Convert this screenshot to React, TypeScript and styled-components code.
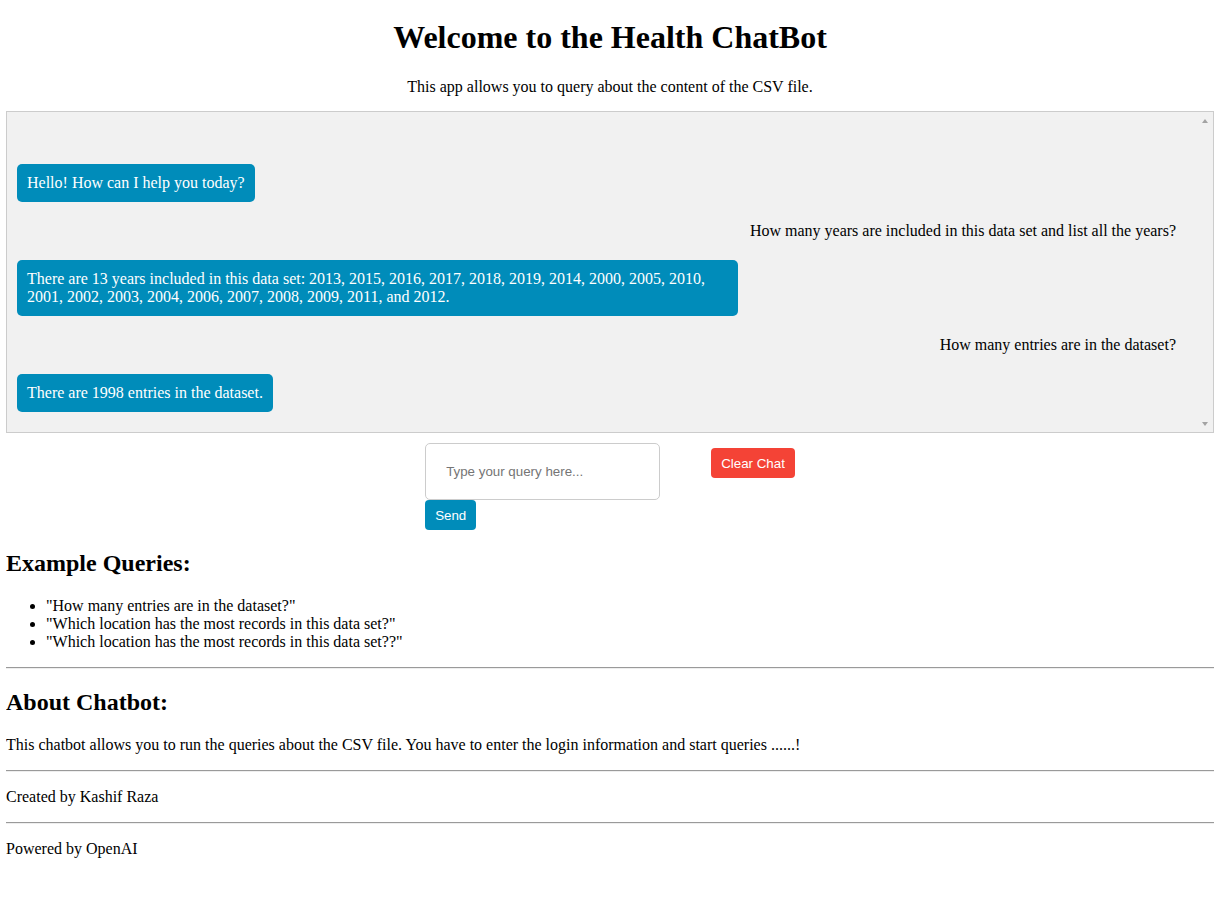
import React from "react";
import styled, { createGlobalStyle } from "styled-components";

const GlobalStyle = createGlobalStyle`
  html, body {
    background: #ffffff;
  }
  body {
    margin: 6px;
    font-family: "Liberation Serif", "Times New Roman", serif;
    font-size: 16px;
    color: #000000;
  }
`;

const Page = styled.div`
  display: block;
`;

const Title = styled.h1`
  font-size: 32px;
  font-weight: bold;
  text-align: center;
  margin: 13px 0 22.44px;
`;

const Intro = styled.p`
  text-align: center;
  margin: 16px 0 15px;
`;

const ChatFrame = styled.div`
  box-sizing: border-box;
  height: 322px;
  border: 1px solid #cccccc;
  background: #f1f1f1;
  display: flex;
`;

const MessageList = styled.div`
  flex: 1;
  min-width: 0;
  overflow-y: auto;
  padding: 52px 10px 20px;
  display: flex;
  flex-direction: column;
  gap: 10px;
`;

const ScrollRail = styled.div`
  width: 17px;
  flex: none;
  display: flex;
  flex-direction: column;
  justify-content: space-between;
  background: #f1f1f1;
`;

const ScrollArrow = styled.span<{ $dir: "up" | "down" }>`
  display: flex;
  align-items: center;
  justify-content: center;
  height: 17px;
  &::before {
    content: "";
    width: 0;
    height: 0;
    border-left: 3.5px solid transparent;
    border-right: 3.5px solid transparent;
    ${(p) =>
      p.$dir === "up"
        ? "border-bottom: 4px solid #a3a3a3;"
        : "border-top: 4px solid #a3a3a3;"}
  }
`;

const Message = styled.div<{ $from: "bot" | "user" }>`
  max-width: 60%;
  padding: 10px;
  line-height: 18px;
  border-radius: 5px;
  align-self: ${(p) => (p.$from === "bot" ? "flex-start" : "flex-end")};
  background: ${(p) => (p.$from === "bot" ? "#008cba" : "transparent")};
  color: ${(p) => (p.$from === "bot" ? "#ffffff" : "#000000")};
  text-align: ${(p) => (p.$from === "bot" ? "left" : "right")};
`;

const InputRow = styled.div`
  display: flex;
  justify-content: center;
  align-items: flex-start;
  gap: 51px;
  margin-top: 10px;
`;

const QueryForm = styled.form`
  display: flex;
  flex-direction: column;
  align-items: flex-start;
`;

const QueryInput = styled.input`
  box-sizing: border-box;
  width: 235px;
  height: 57px;
  padding: 20px;
  border: 1px solid #cccccc;
  border-radius: 5px;
  font-family: "Liberation Sans", Arial, sans-serif;
  font-size: 13.333px;
  outline: none;
  &::placeholder {
    color: #757575;
  }
`;

const ActionButton = styled.button<{ $variant: "send" | "clear" }>`
  box-sizing: border-box;
  height: 30px;
  padding: 0 10px;
  border: none;
  border-radius: 4px;
  background: ${(p) => (p.$variant === "send" ? "#008cba" : "#f44336")};
  color: #ffffff;
  font-family: "Liberation Sans", Arial, sans-serif;
  font-size: 13.333px;
  cursor: pointer;
  margin-top: ${(p) => (p.$variant === "clear" ? "5px" : "0")};
`;

const SectionTitle = styled.h2`
  font-size: 24px;
  font-weight: bold;
  margin: 19.92px 0;
`;

const ExampleList = styled.ul`
  margin: 16px 0;
  padding-left: 40px;
`;

const Paragraph = styled.p`
  margin: 16px 0;
`;

const Divider = styled.hr`
  margin: 8px 0;
  border: 0;
  border-top: 1px solid #9a9a9a;
  border-bottom: 1px solid #eeeeee;
`;

const messages: { from: "bot" | "user"; text: string }[] = [
  { from: "bot", text: "Hello! How can I help you today?" },
  { from: "user", text: "How many years are included in this data set and list all the years?" },
  {
    from: "bot",
    text:
      "There are 13 years included in this data set: 2013, 2015, 2016, 2017, 2018, 2019, 2014, 2000, 2005, 2010, 2001, 2002, 2003, 2004, 2006, 2007, 2008, 2009, 2011, and 2012.",
  },
  { from: "user", text: "How many entries are in the dataset?" },
  { from: "bot", text: "There are 1998 entries in the dataset." },
];

export default function App() {
  return (
    <Page>
      <GlobalStyle />
      <Title>Welcome to the Health ChatBot</Title>
      <Intro>This app allows you to query about the content of the CSV file.</Intro>
      <ChatFrame>
        <MessageList>
          {messages.map((m, i) => (
            <Message key={i} $from={m.from}>
              {m.text}
            </Message>
          ))}
        </MessageList>
        <ScrollRail aria-hidden="true">
          <ScrollArrow $dir="up" />
          <ScrollArrow $dir="down" />
        </ScrollRail>
      </ChatFrame>
      <InputRow>
        <QueryForm onSubmit={(e) => e.preventDefault()}>
          <QueryInput type="text" placeholder="Type your query here..." />
          <ActionButton $variant="send" type="submit">
            Send
          </ActionButton>
        </QueryForm>
        <ActionButton $variant="clear" type="button">
          Clear Chat
        </ActionButton>
      </InputRow>
      <SectionTitle>Example Queries:</SectionTitle>
      <ExampleList>
        <li>"How many entries are in the dataset?"</li>
        <li>"Which location has the most records in this data set?"</li>
        <li>"Which location has the most records in this data set??"</li>
      </ExampleList>
      <Divider />
      <SectionTitle>About Chatbot:</SectionTitle>
      <Paragraph>
        This chatbot allows you to run the queries about the CSV file. You have to enter the login
        information and start queries ......!
      </Paragraph>
      <Divider />
      <Paragraph>Created by Kashif Raza</Paragraph>
      <Divider />
      <Paragraph>Powered by OpenAI</Paragraph>
    </Page>
  );
}
